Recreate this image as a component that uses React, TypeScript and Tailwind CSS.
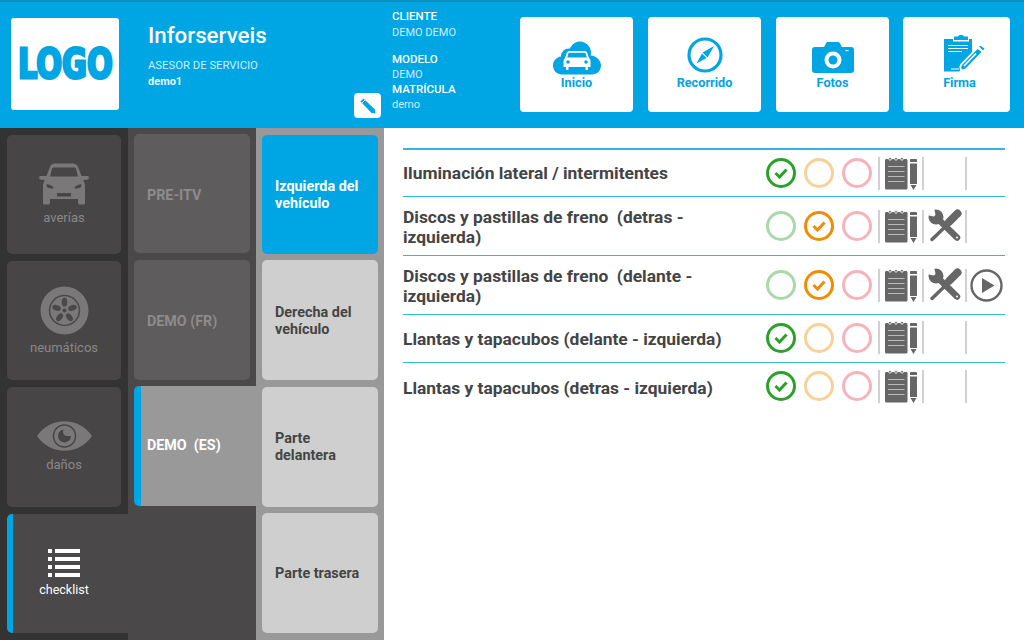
const BLUE = "#00a5e3";

function LogoText() {
  return (
    <span className="inline-block scale-x-[0.76] font-['DejaVu_Sans'] text-[40px] font-bold leading-none text-[#00a5e3] [-webkit-text-stroke:3px_#00a5e3]">
      LOGO
    </span>
  );
}

function EditPencil() {
  return (
    <svg viewBox="0 0 16 16" className="h-4 w-4">
      <path d="M3.500 0.500L15 11.500L15.500 15.500L11.500 15L0.500 3.500Z" fill={BLUE} />
      <path d="M1.500 5.500L5.500 1.500" stroke="#fff" strokeWidth="1" />
    </svg>
  );
}

function CloudCar() {
  return (
    <svg viewBox="0 0 48 34" className="h-[34px] w-[48px]">
      <path
        d="M9 33.500C4 33.500 0 29.500 0 24.500C0 20 3.500 16 8 15.500C8 10.500 12 7 17 7.500C19 3 23 0.500 27 0.500C33 0.500 38 5.500 38 11.500C38 12.500 38 13.500 37.700 14.500C43.500 15 48 19.500 48 24.500C48 29.500 44 33.500 39 33.500Z"
        fill={BLUE}
      />
      <g transform="translate(0 -1.500)">
        <path
          d="M16.500 11.500H31.500C33 11.500 34 12.500 34.500 14L36 18.500C37 19.500 37.500 20.500 37.500 22V27.500H35V30C35 30.800 32.500 30.800 32.500 30V27.500H15.500V30C15.500 30.800 13 30.800 13 30V27.500H10.500V22C10.500 20.500 11 19.500 12 18.500L13.500 14C14 12.500 15 11.500 16.500 11.500ZM16.500 13.300C15.800 13.300 15.500 13.800 15.200 14.500L14.200 18H33.800L32.800 14.500C32.500 13.800 32.200 13.300 31.500 13.300Z"
          fill="#fff"
          fillRule="evenodd"
        />
        <circle cx="15" cy="22.500" r="1.800" fill={BLUE} />
        <circle cx="33" cy="22.500" r="1.800" fill={BLUE} />
      </g>
    </svg>
  );
}

function Compass() {
  return (
    <svg viewBox="0 0 36 36" className="h-9 w-9">
      <circle cx="18" cy="18" r="16" fill="none" stroke={BLUE} strokeWidth="3.200" />
      <path d="M27 9L20.500 20.500L15.500 15.500Z" fill={BLUE} />
      <path d="M9.500 26.500L15 16.500L19.500 21Z" fill={BLUE} />
    </svg>
  );
}

function Camera() {
  return (
    <svg viewBox="0 0 42 31" className="h-[31px] w-[42px]">
      <path
        d="M3 5H12L14 1.500C14.500 0.500 15 0 16 0H26C27 0 27.500 0.500 28 1.500L30 5H39C41 5 42 6 42 8V28C42 30 41 31 39 31H3C1 31 0 30 0 28V8C0 6 1 5 3 5Z"
        fill={BLUE}
      />
      <circle cx="21" cy="18" r="8.500" fill="#fff" />
      <circle cx="21" cy="18" r="4.500" fill={BLUE} />
      <rect x="33.500" y="8" width="3" height="1.200" fill="#fff" />
    </svg>
  );
}

function Clipboard() {
  return (
    <svg viewBox="0 0 42 38" className="h-[38px] w-[42px]">
      <path d="M1 5H10V7.500H26V5H29V22L18 33L16.500 37.500H1Z" fill={BLUE} />
      <path d="M11 2.500H15C15.500 0.500 20.500 0.500 21 2.500H25V6H11Z" fill={BLUE} />
      <path d="M5 11.500H25M5 14.500H25M5 17.500H19M8 35H16" stroke="#fff" strokeWidth="1.200" />
      <path d="M21 37L18 36.500C16 35 16 32 17.500 30L34.500 12.500L40 17L24.500 34C23 35.500 22 36.500 21 37Z" fill="#fff" />
      <path d="M19 35.500C18 34 18 32 19.500 30.500L34.500 15L38.500 18L23.500 33.500C22.500 34.800 20.500 35.500 19 35.500Z" fill={BLUE} />
      <path d="M21 32L33 19.500" stroke="#fff" strokeWidth="1.800" />
      <path d="M36 12.500L38 12L41.500 14.500L40 16.500Z" fill={BLUE} />
    </svg>
  );
}

function CarFront() {
  return (
    <svg viewBox="0 0 50 42" className="h-[42px] w-[50px]" fill="#7a7879">
      <path
        fillRule="evenodd"
        d="M11 4C12 1.500 13.500 0.500 16 0.500H34C36.500 0.500 38 1.500 39 4L42.500 13H49C50 13 50 16 49 16.500L44 17C45.500 19 46 21 46 23V36C46 41 46 41.500 45 41.500H40C39 41.500 39 39 39 36H11C11 39 11 41.500 10 41.500H5C4 41.500 4 41 4 36V23C4 21 4.500 19 6 17L1 16.500C0 16 0 13 1 13H7.500ZM14.500 4.500C13.800 4.500 13.200 5 13 5.800L11 13.500H39L37 5.800C36.800 5 36.200 4.500 35.500 4.500ZM7.500 21L8 24C9 25.500 12 25.500 14.500 25.500L14 23.500C12 22.500 10 21.500 7.500 21ZM42.500 21C40 21.500 38 22.500 36 23.500L35.500 25.500C38 25.500 41 25.500 42 24ZM18 30V33.500H32V30Z"
      />
    </svg>
  );
}

function Tire() {
  return (
    <svg viewBox="0 0 50 50" className="h-[49px] w-[49px]">
      <circle cx="25" cy="25" r="24.500" fill="#7a7879" />
      <circle cx="25" cy="25" r="16" fill="#4a4849" />
      <circle cx="25" cy="25" r="14.500" fill="#7a7879" />
      <g fill="#4a4849">
        <ellipse cx="25" cy="16.500" rx="2.800" ry="4.500" />
        <ellipse cx="25" cy="16.500" rx="2.800" ry="4.500" transform="rotate(72 25 25)" />
        <ellipse cx="25" cy="16.500" rx="2.800" ry="4.500" transform="rotate(144 25 25)" />
        <ellipse cx="25" cy="16.500" rx="2.800" ry="4.500" transform="rotate(216 25 25)" />
        <ellipse cx="25" cy="16.500" rx="2.800" ry="4.500" transform="rotate(288 25 25)" />
        <circle cx="25" cy="25" r="2" />
      </g>
    </svg>
  );
}

function Eye() {
  return (
    <svg viewBox="0 0 56 30" className="h-[30px] w-[55px]" fill="#7a7879">
      <path
        fillRule="evenodd"
        d="M0 15C7 5 17 0 28 0C39 0 49 5 56 15C49 25 39 30 28 30C17 30 7 25 0 15ZM28 3C21 3 16 8.500 16 15C16 21.500 21 27 28 27C35 27 40 21.500 40 15C40 8.500 35 3 28 3Z"
      />
      <path
        fillRule="evenodd"
        d="M28 4.500C34 4.500 38.500 9 38.500 15C38.500 21 34 25.500 28 25.500C22 25.500 17.500 21 17.500 15C17.500 9 22 4.500 28 4.500ZM28 8.500C24 8.500 21.500 11.500 21.500 15C21.500 18.500 24 21.500 28 21.500C32 21.500 34.500 18.500 34.500 15H30C28 15 26.500 13 26.500 11C26.500 10 27 9 27.500 8.500Z"
      />
    </svg>
  );
}

function ListIcon() {
  return (
    <div className="flex flex-col gap-[4px]">
      {[0, 1, 2, 3].map((i) => (
        <div key={i} className="flex gap-[3px]">
          <div className="h-1 w-1 bg-white" />
          <div className="h-1 w-[25px] bg-white" />
        </div>
      ))}
    </div>
  );
}

function StatusCircle({ color, faded, checked }: { color: string; faded?: boolean; checked?: boolean }) {
  return (
    <svg viewBox="0 0 30 30" className={`h-[30px] w-[30px] ${faded ? "opacity-40" : ""}`}>
      <circle cx="15" cy="15" r="13.500" fill="none" stroke={color} strokeWidth="3" />
      {checked && <path d="M9.500 15L13.500 19L20.500 11.500" fill="none" stroke={color} strokeWidth="3" />}
    </svg>
  );
}

function Notepad() {
  return (
    <svg viewBox="0 0 34 33" className="h-[33px] w-[34px]">
      <path d="M1 3.500C1 2.500 1.500 2 2.500 2H22C23 2 23.500 2.500 23.500 3.500V31C23.500 32 23 32.500 22 32.500H2.500C1.500 32.500 1 32 1 31Z" fill="#666" />
      <g stroke="#fff" strokeWidth="0.800" fill="#666">
        <circle cx="6" cy="1.800" r="1.400" />
        <circle cx="12" cy="1.800" r="1.400" />
        <circle cx="18" cy="1.800" r="1.400" />
      </g>
      <path d="M4 9.500H20.500M4 14.500H20.500M4 19.500H20.500M4 24.500H20.500" stroke="#bbb" strokeWidth="1.200" />
      <path d="M26 3C26 2.300 26.500 2 27 2H32C32.600 2 33 2.300 33 3V5H26ZM26 6.500H33V27H26ZM26.500 28H32.500L29.500 33Z" fill="#666" />
    </svg>
  );
}

function Tools() {
  return (
    <svg viewBox="0 0 34 34" className="h-[34px] w-[34px]">
      <circle cx="8" cy="8" r="7.500" fill="#666" />
      <path d="M8 8L6 -1H-1V6Z" fill="#fff" />
      <path d="M9 9L29 28.500" stroke="#666" strokeWidth="6.500" strokeLinecap="round" />
      <circle cx="29" cy="28.500" r="1" fill="#fff" />
      <path d="M29.500 4.500L21 13" stroke="#666" strokeWidth="8" strokeLinecap="round" />
      <path d="M18 17L4 30.500" stroke="#666" strokeWidth="3.500" strokeLinecap="round" />
    </svg>
  );
}

function PlayCircle() {
  return (
    <svg viewBox="0 0 33 33" className="h-[33px] w-[33px]">
      <circle cx="16.500" cy="16.500" r="15" fill="none" stroke="#666" strokeWidth="2.400" />
      <path d="M12 9L24.500 16.500L12 24Z" fill="#666" />
    </svg>
  );
}

const topButtons = [
  { label: "Inicio", icon: <CloudCar />, cls: "w-[113px] pt-[24px]", labelCls: "" },
  { label: "Recorrido", icon: <Compass />, cls: "w-[113px] pt-[20px]", labelCls: "" },
  { label: "Fotos", icon: <Camera />, cls: "w-[113px] pt-[25px]", labelCls: "" },
  { label: "Firma", icon: <div className="ml-[15px]"><Clipboard /></div>, cls: "-ml-px w-[107px] pt-[17px]", labelCls: "ml-[6px]" },
];

const rows = [
  { title: "Iluminación lateral / intermitentes", state: "ok", h: "h-[47px] border-b", titleCls: "", tools: false, play: false },
  { title: "Discos y pastillas de freno  (detras - izquierda)", state: "warn", h: "h-[59px] border-b", titleCls: "pt-px", tools: true, play: false },
  { title: "Discos y pastillas de freno  (delante - izquierda)", state: "warn", h: "h-[59px] border-b", titleCls: "pt-[2px]", tools: true, play: true },
  { title: "Llantas y tapacubos (delante - izquierda)", state: "ok", h: "h-[48px] border-b pb-[2px]", titleCls: "pt-[2px]", tools: false, play: false },
  { title: "Llantas y tapacubos (detras - izquierda)", state: "ok", h: "h-[48px] pb-[2px]", titleCls: "pt-[4px]", tools: false, play: false },
];

function Divider() {
  return <div className="h-[33px] w-[2px] shrink-0 bg-[#d0d0d0]" />;
}

export default function App() {
  return (
    <div className="flex h-[640px] w-[1024px] flex-col overflow-hidden bg-white font-['Roboto',sans-serif]">
      <header className="flex h-[128px] shrink-0 border-t-2 border-[#0a8fc2] bg-[#00a5e3]">
        <div className="ml-[11px] mt-4 flex h-[92px] w-[108px] items-center justify-center overflow-hidden rounded-[3px] bg-white">
          <LogoText />
        </div>

        <div className="ml-[29px] w-[206px] pt-[20px] text-white">
          <div className="text-[22.300px] font-medium leading-[27px]">Inforserveis</div>
          <div className="mt-[9px] text-[11.300px] leading-[15px] text-[#cdeefa]">ASESOR DE SERVICIO</div>
          <div className="mt-px text-[11px] font-bold leading-[15px] text-[#e6f7fd]">demo1</div>
        </div>

        <div className="mt-[91px] flex h-[25px] w-[27px] shrink-0 items-center justify-center rounded-[4px] bg-white">
          <EditPencil />
        </div>

        <div className="ml-[11px] w-[128px] pt-[7px] text-[11px] leading-[15px] text-[#cdeefa]">
          <div className="text-[11.500px] font-medium text-white">CLIENTE</div>
          <div className="pt-px">DEMO DEMO</div>
          <div className="mt-[12px] text-[11.500px] font-medium text-white">MODELO</div>
          <div>DEMO</div>
          <div className="text-[11.500px] font-medium text-white">MATRÍCULA</div>
          <div>demo</div>
        </div>

        <div className="mt-[15px] flex gap-[15px]">
          {topButtons.map((b) => (
            <div key={b.label} className={`relative flex h-[95px] ${b.cls} flex-col items-center rounded-[4px] bg-white`}>
              {b.icon}
              <div className={`absolute top-[58px] ${b.labelCls} text-[12.700px] font-bold leading-[16px] text-[#00a5e3]`}>{b.label}</div>
            </div>
          ))}
        </div>
      </header>

      <div className="flex min-h-0 flex-1">
        <nav className="flex w-[128px] shrink-0 flex-col gap-[7px] bg-[#333333] pl-[7px] pt-[7px]">
          <div className="flex h-[119px] w-[114px] flex-col items-center rounded-[5px] bg-[#474546] pt-[28px]">
            <CarFront />
            <div className="mt-[5px] text-[13px] leading-[16px] text-[#8a8889]">averías</div>
          </div>
          <div className="flex h-[119px] w-[114px] flex-col items-center rounded-[5px] bg-[#474546] pt-[25px]">
            <Tire />
            <div className="mt-[5px] text-[13px] leading-[16px] text-[#8a8889]">neumáticos</div>
          </div>
          <div className="flex h-[120px] w-[114px] flex-col items-center rounded-[5px] bg-[#474546] pt-[34px]">
            <Eye />
            <div className="mt-[6px] text-[13px] leading-[16px] text-[#8a8889]">daños</div>
          </div>
          <div className="flex h-[119px] w-[121px] flex-col rounded-l-[5px] border-l-[6px] border-[#00a5e3] bg-[#4a4849] pt-[35px]">
            <div className="-ml-[6px] flex w-[114px] flex-col items-center">
              <ListIcon />
              <div className="mt-[5px] text-[12.500px] leading-[16px] text-white">checklist</div>
            </div>
          </div>
        </nav>

        <div className="flex w-[128px] shrink-0 flex-col gap-[6px] bg-[#4a4849] pl-[6px] pt-[6px] text-[14.300px] font-bold">
          <div className="flex h-[119px] w-[116px] items-center rounded-[5px] bg-[#5e5c5d] pl-[13px] pt-[4px] text-[#8d8b8c]">PRE-ITV</div>
          <div className="mt-px flex h-[120px] w-[116px] items-center rounded-[5px] bg-[#5e5c5d] pl-[13px] pt-[4px] text-[#8d8b8c]">DEMO (FR)</div>
          <div className="flex h-[120px] w-[122px] items-center rounded-l-[5px] border-l-[7px] border-[#00a5e3] bg-[#999999] pl-[6px] whitespace-pre text-white">DEMO  (ES)</div>
        </div>

        <div className="flex w-[128px] shrink-0 flex-col bg-[#999999] pl-[6px] pt-[7px] text-[14.400px] font-bold leading-[17px]">
          <div className="flex h-[119px] w-[116px] items-center rounded-[5px] bg-[#00a5e3] pl-[13px] pr-2 text-white">Izquierda del vehículo</div>
          <div className="mt-[6px] flex h-[120px] w-[116px] items-center rounded-[5px] bg-[#cfcfcf] pl-[13px] pr-2 pt-[2px] text-[#444]">Derecha del vehículo</div>
          <div className="mt-[7px] flex h-[120px] w-[116px] items-center rounded-[5px] bg-[#cfcfcf] pl-[13px] pr-2 text-[#444]">Parte delantera</div>
          <div className="mt-[6px] flex h-[120px] w-[116px] items-center rounded-[5px] bg-[#cfcfcf] pl-[13px] pr-2 text-[#444]">Parte trasera</div>
        </div>

        <main className="flex-1 pl-[19px] pr-[19px] pt-[20px]">
          <div className="border-t-2 border-[#33b5e5]">
            {rows.map((r) => (
              <div key={r.title} className={`flex ${r.h} items-center border-[#33b5e5]`}>
                <div className={`mr-[13px] w-[345px] shrink-0 whitespace-pre-wrap ${r.titleCls} text-[17.400px] font-bold leading-[20px] text-[#444]`}>
                  {r.title}
                </div>
                <div className="ml-[5px] flex items-center gap-2">
                  <StatusCircle color="#2ba02b" checked={r.state === "ok"} faded={r.state !== "ok"} />
                  <StatusCircle color="#f28c00" checked={r.state === "warn"} faded={r.state !== "warn"} />
                  <StatusCircle color="#ee4055" faded />
                </div>
                <div className="ml-[6px] flex items-center">
                  <Divider />
                  <div className="flex w-[42px] justify-center"><Notepad /></div>
                  <Divider />
                  <div className="flex w-[41px] justify-center">{r.tools && <Tools />}</div>
                  <Divider />
                  <div className="ml-[3px] flex w-[33px] justify-center">{r.play && <PlayCircle />}</div>
                </div>
              </div>
            ))}
          </div>
        </main>
      </div>
    </div>
  );
}
